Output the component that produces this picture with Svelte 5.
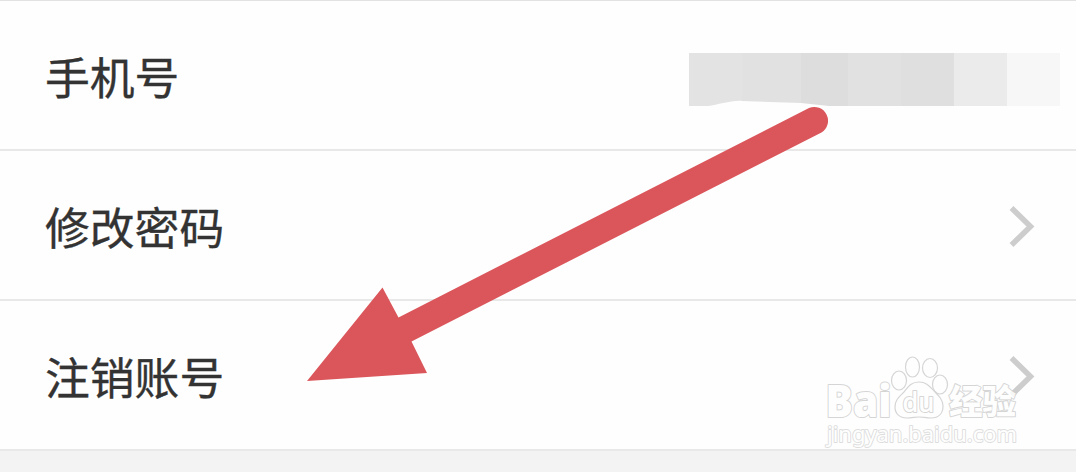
<script>
const rows = [
  { label: '手机号', masked: true },
  { label: '修改密码', masked: false },
  { label: '注销账号', masked: false },
]
</script>

<div class="settings">
  {#each rows as row (row.label)}
    <div class="row">
      <span class="label">{row.label}</span>
      {#if row.masked}
        <svg class="mask" width="371" height="54" viewBox="0 0 371 54">
          <path d="M0 0H53V48C43 47 29 52 19 53H0Z" fill="#e3e3e3" />
          <path d="M53 0H112V50L53 48Z" fill="#e1e1e1" />
          <path d="M112 0H159V53H140L112 50Z" fill="#dddddd" />
          <path d="M159 0H212V53H159Z" fill="#e1e1e1" />
          <path d="M212 0H265V53H212Z" fill="#dfdfdf" />
          <path d="M265 0H318V53H265Z" fill="#ebebeb" />
          <path d="M318 0H371V53H318Z" fill="#f7f7f7" />
        </svg>
      {:else}
        <svg class="chevron" width="30" height="44" viewBox="0 0 30 44">
          <path d="M4.5 4L23.5 22.5L4.5 41" />
        </svg>
      {/if}
    </div>
  {/each}

  <svg class="overlay" width="1076" height="472" viewBox="0 0 1076 472">
    <g class="watermark">
      <text x="825.5" y="416.5" class="brand" textLength="66" lengthAdjust="spacingAndGlyphs">Bai</text>
      <g class="paw">
        <ellipse cx="899" cy="380.5" rx="7.5" ry="9.5" />
        <ellipse cx="912.5" cy="367" rx="7" ry="10" />
        <ellipse cx="930" cy="368" rx="7.5" ry="9.5" />
        <ellipse cx="940" cy="384.5" rx="7.5" ry="9.5" />
        <path d="M919 382C911 382 908 387 904 392C899 397 895 400 895 407C895 414 900 418 907 418C912 418 915 417 919 417C923 417 926 418 931 418C939 418 943 413 943 406C943 400 939 396 935 392C930 387 927 382 919 382Z" />
      </g>
      <text x="902.5" y="411.5" class="du" textLength="32" lengthAdjust="spacingAndGlyphs">du</text>
      <text x="949" y="414" class="cn" textLength="67" lengthAdjust="spacingAndGlyphs">经验</text>
      <text x="827" y="442" class="url" textLength="190" lengthAdjust="spacingAndGlyphs">jingyan.baidu.com</text>
    </g>
    <path
      class="arrow"
      d="M307 381L382.5 287.5L398.5 317.5L809 108A13.8 13.8 0 0 1 821.5 132.5L411.5 341.5L427 373Z"
    />
  </svg>
</div>

<style>
:global(body) {
  margin: 0;
  background: #fff;
}

.settings {
  position: relative;
  box-sizing: border-box;
  height: 472px;
  overflow: hidden;
  background: linear-gradient(#e4e4e4 0 1px, #f3f3f3 1px);
  font-family: "Noto Sans CJK SC", sans-serif;
}

.row {
  box-sizing: border-box;
  height: 150px;
  padding: 0 16px 0 45px;
  display: flex;
  align-items: center;
  justify-content: space-between;
  background: #fefefe;
  border-bottom: 2px solid #e8e8e8;
}

.row:first-child {
  height: 151px;
  border-top: 1px solid #e2e2e2;
}

.label {
  padding-top: 2px;
  font-size: 44.8px;
  line-height: 66px;
  color: #333;
  -webkit-text-stroke: 0.35px #333;
}

.mask {
  margin-top: 9px;
}

.chevron {
  margin-right: 23px;
  margin-top: 2px;
}

.chevron path {
  fill: none;
  stroke: #cdcdcd;
  stroke-width: 5.5;
}

.overlay {
  position: absolute;
  inset: 0;
  pointer-events: none;
}

.arrow {
  fill: #db565b;
}

.watermark {
  fill: #fff;
  opacity: 0.85;
}

.watermark text {
  stroke: #cfcfcf;
  stroke-width: 2;
  stroke-linejoin: round;
  paint-order: stroke;
}

.paw {
  stroke: #cfcfcf;
  stroke-width: 1.2;
}

.watermark .brand {
  font: 800 44px "Open Sans", sans-serif;
}

.watermark .du {
  font: 600 27px "Open Sans", sans-serif;
}

.watermark .cn {
  font: 900 34px "Noto Sans CJK SC", sans-serif;
}

.watermark .url {
  font: 21.5px "Noto Sans", sans-serif;
  stroke: #d8d8d8;
  stroke-width: 1.8;
}
</style>
